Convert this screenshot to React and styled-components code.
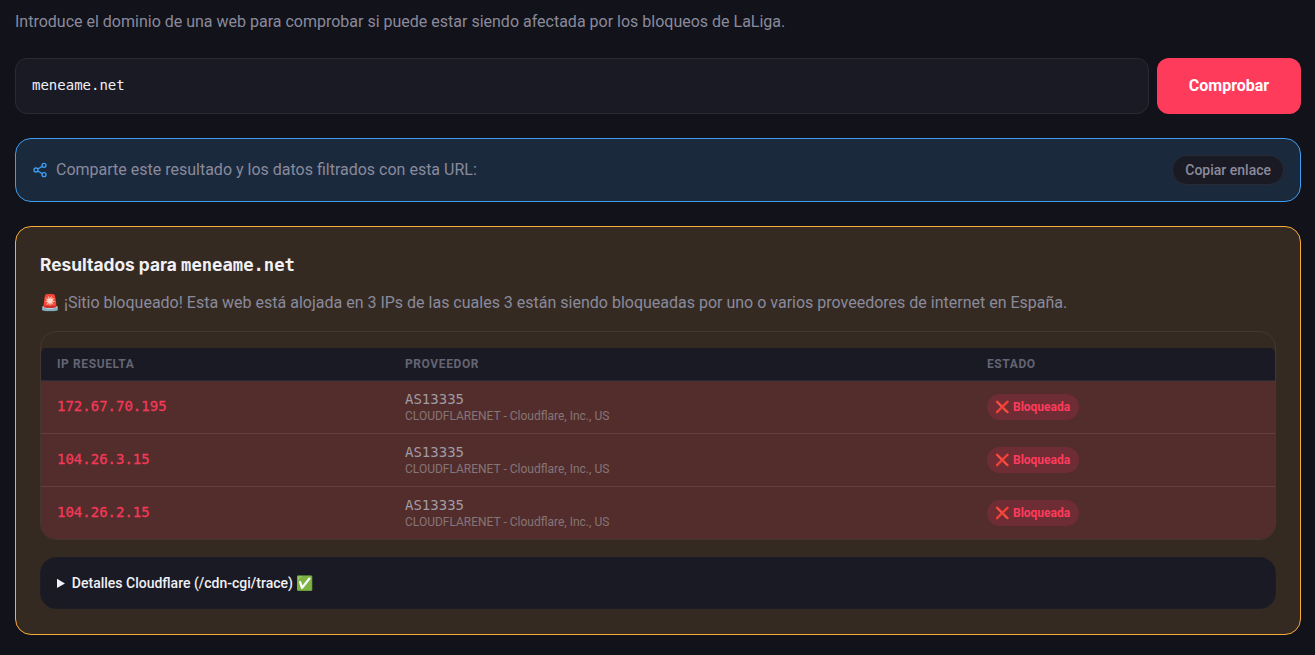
import React from 'react';
import styled, { createGlobalStyle } from 'styled-components';

const GlobalStyle = createGlobalStyle`
  html, body {
    margin: 0;
    height: 655px;
    overflow: hidden;
    background: #12121a;
  }
  * {
    box-sizing: border-box;
  }
  body {
    font-family: Roboto, "Noto Sans", sans-serif;
    color: #8a8a9c;
  }
`;

const mono = '"DejaVu Sans Mono", "Liberation Mono", monospace';

const Page = styled.main`
  width: 1315px;
  padding: 11px 14px 0 15px;
  display: flex;
  flex-direction: column;
`;

const Intro = styled.p`
  margin: 0 0 25px;
  font-size: 16px;
  line-height: 22px;
`;

const SearchRow = styled.form`
  display: flex;
  gap: 8px;
  height: 56px;
  margin-bottom: 24px;
`;

const DomainInput = styled.input`
  flex: 1;
  min-width: 0;
  height: 100%;
  padding: 0 16px 2px;
  background: #1a1a24;
  border: 1px solid #2a2a35;
  border-radius: 12px;
  color: #f0f0f5;
  font-family: ${mono};
  font-size: 14px;
  outline: none;
`;

const SubmitButton = styled.button`
  width: 144px;
  border: 0;
  border-radius: 12px;
  background: #ff3b5c;
  color: #fff;
  font-family: Roboto, sans-serif;
  font-size: 16px;
  font-weight: 700;
  padding: 0 0 2px;
`;

const ShareBox = styled.section`
  display: flex;
  align-items: center;
  justify-content: space-between;
  height: 64px;
  margin-bottom: 24px;
  padding: 0 16px;
  background: #1a293c;
  border: 1px solid #3f9cf0;
  border-radius: 16px;
`;

const ShareLabel = styled.div`
  display: flex;
  align-items: center;
  gap: 8px;
  font-size: 16px;
  line-height: 22px;
  margin-top: -1px;
`;

const CopyButton = styled.button`
  height: 30px;
  padding: 0 12px 1px;
  background: #1a1a24;
  border: 1px solid #2a2a35;
  border-radius: 15px;
  color: #8a8a9c;
  font-family: Roboto, sans-serif;
  font-size: 14px;
  font-weight: 500;
`;

const ResultCard = styled.section`
  height: 409px;
  padding: 24px;
  background: #352a22;
  border: 1px solid #fbab3a;
  border-radius: 16px;
`;

const Title = styled.h2`
  margin: 2px 0 14px;
  font-family: Inter, sans-serif;
  font-size: 17.35px;
  line-height: 24px;
  font-weight: 700;
  color: #f0f0f5;
`;

const TitleDomain = styled.code`
  font-family: ${mono};
  font-size: 17.2px;
  font-weight: 700;
`;

const Summary = styled.p`
  margin: 0 0 16px;
  font-size: 16px;
  line-height: 24px;
`;

const TableWrap = styled.div`
  padding-top: 16px;
  border: 1px solid #43372f;
  border-radius: 16px;
  overflow: hidden;
`;

const Table = styled.table`
  width: 100%;
  table-layout: fixed;
  border-collapse: separate;
  border-spacing: 0;
`;

const HeadCell = styled.th`
  width: ${({ $width }) => $width};
  height: 33px;
  padding: 0 16px;
  background: #1a1a24;
  border-bottom: 1px solid #2a2a35;
  text-align: left;
  font-size: 12px;
  font-weight: 700;
  letter-spacing: 0.6px;
  color: #646472;

  &:first-child {
    border-top-left-radius: 5px;
  }

  &:last-child {
    border-top-right-radius: 5px;
  }
`;

const Row = styled.tr`
  background: #532d2b;
`;

const Cell = styled.td`
  height: 53px;
  padding: 0 16px;
  vertical-align: middle;
  border-bottom: 1px solid #66403e;

  ${Row}:last-child & {
    height: 52px;
    border-bottom: 0;
  }
`;

const Ip = styled.span`
  display: block;
  padding-bottom: 2px;
  font-family: ${mono};
  font-size: 14px;
  color: #f5385a;
  -webkit-text-stroke: 0.3px #f5385a;
`;

const Asn = styled.div`
  font-family: ${mono};
  font-size: 14px;
  line-height: 17px;
  color: #a09ca6;
`;

const AsnName = styled.div`
  margin-top: 1px;
  font-size: 12px;
  line-height: 14px;
  color: #857578;
`;

const Badge = styled.span`
  display: inline-flex;
  align-items: center;
  gap: 3px;
  height: 26px;
  padding: 0 9px 0 8px;
  border-radius: 13px;
  background: #6e2d34;
  color: #ff3b5c;
  font-size: 12px;
  font-weight: 700;
`;

const Details = styled.details`
  margin-top: 17px;
  height: 52px;
  background: #1a1a24;
  border: 1px solid #1e1d26;
  border-radius: 16px;
`;

const DetailsTitle = styled.summary`
  padding: 0 16px;
  line-height: 50px;
  font-size: 14px;
  font-weight: 500;
  color: #f0f0f5;
`;

const rows = [
  { ip: '172.67.70.195' },
  { ip: '104.26.3.15' },
  { ip: '104.26.2.15' },
];

const ShareIcon = () => (
  <svg width="16" height="16" viewBox="0 0 24 24" fill="none" stroke="#3f9cf0" strokeWidth="2">
    <circle cx="18" cy="5" r="3" />
    <circle cx="6" cy="12" r="3" />
    <circle cx="18" cy="19" r="3" />
    <line x1="8.6" y1="13.5" x2="15.4" y2="17.5" />
    <line x1="15.4" y1="6.5" x2="8.6" y2="10.5" />
  </svg>
);

const App = () => (
  <Page>
    <GlobalStyle />
    <Intro>Introduce el dominio de una web para comprobar si puede estar siendo afectada por los bloqueos de LaLiga.</Intro>
    <SearchRow onSubmit={(e) => e.preventDefault()}>
      <DomainInput defaultValue="meneame.net" />
      <SubmitButton>Comprobar</SubmitButton>
    </SearchRow>
    <ShareBox>
      <ShareLabel>
        <ShareIcon />
        Comparte este resultado y los datos filtrados con esta URL:
      </ShareLabel>
      <CopyButton>Copiar enlace</CopyButton>
    </ShareBox>
    <ResultCard>
      <Title>
        Resultados para <TitleDomain>meneame.net</TitleDomain>
      </Title>
      <Summary>🚨 ¡Sitio bloqueado! Esta web está alojada en 3 IPs de las cuales 3 están siendo bloqueadas por uno o varios proveedores de internet en España.</Summary>
      <TableWrap>
        <Table>
          <thead>
            <tr>
              <HeadCell $width="348px">IP RESUELTA</HeadCell>
              <HeadCell $width="582px">PROVEEDOR</HeadCell>
              <HeadCell>ESTADO</HeadCell>
            </tr>
          </thead>
          <tbody>
            {rows.map((row) => (
              <Row key={row.ip}>
                <Cell><Ip>{row.ip}</Ip></Cell>
                <Cell>
                  <Asn>AS13335</Asn>
                  <AsnName>CLOUDFLARENET - Cloudflare, Inc., US</AsnName>
                </Cell>
                <Cell><Badge>❌ Bloqueada</Badge></Cell>
              </Row>
            ))}
          </tbody>
        </Table>
      </TableWrap>
      <Details>
        <DetailsTitle>Detalles Cloudflare (/cdn-cgi/trace) ✅</DetailsTitle>
      </Details>
    </ResultCard>
  </Page>
);

export default App;
